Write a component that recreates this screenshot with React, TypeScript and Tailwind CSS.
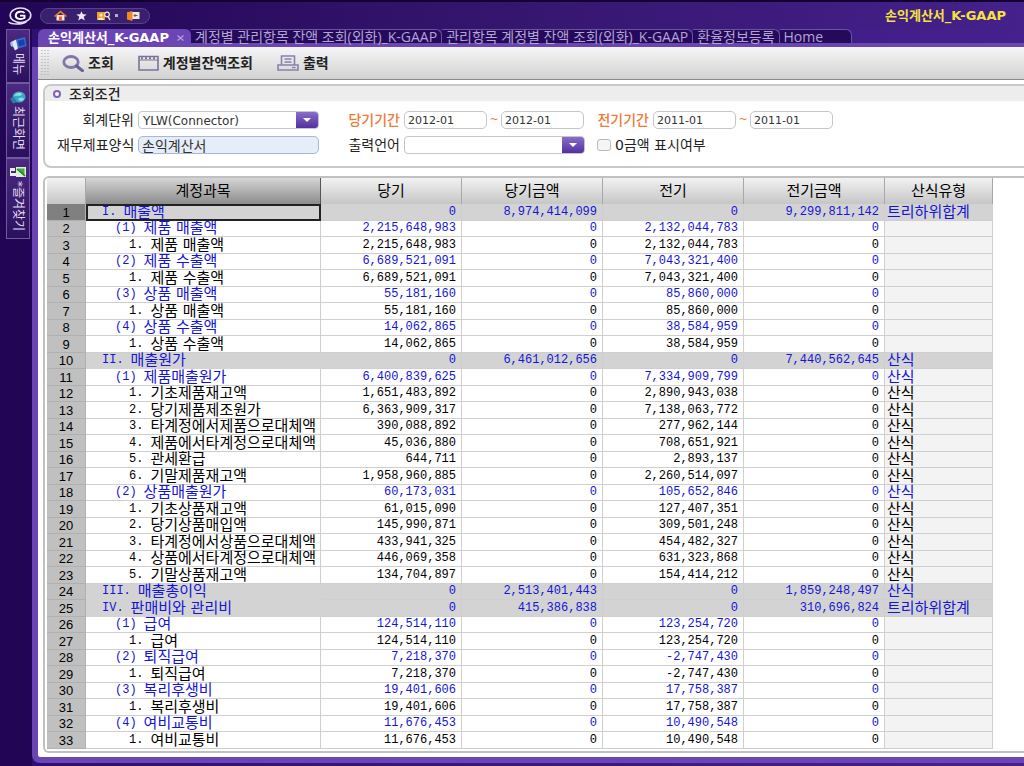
import * as React from "react";

type Level = 0 | 1 | 2;

type Row = {
  level: Level;
  no: string;
  name: string;
  current: string;
  currentSum: string;
  prior: string;
  priorSum: string;
  formula: string;
};

const row = (level: Level, no: string, name: string, current: string, prior: string, formula = ""): Row => ({
  level,
  no,
  name,
  current: level === 0 ? "0" : current,
  currentSum: level === 0 ? current : "0",
  prior: level === 0 ? "0" : prior,
  priorSum: level === 0 ? prior : "0",
  formula,
});

const ROWS: Row[] = [
  row(0, "I.", "매출액", "8,974,414,099", "9,299,811,142", "트리하위합계"),
  row(1, "(1)", "제품 매출액", "2,215,648,983", "2,132,044,783"),
  row(2, "1.", "제품 매출액", "2,215,648,983", "2,132,044,783"),
  row(1, "(2)", "제품 수출액", "6,689,521,091", "7,043,321,400"),
  row(2, "1.", "제품 수출액", "6,689,521,091", "7,043,321,400"),
  row(1, "(3)", "상품 매출액", "55,181,160", "85,860,000"),
  row(2, "1.", "상품 매출액", "55,181,160", "85,860,000"),
  row(1, "(4)", "상품 수출액", "14,062,865", "38,584,959"),
  row(2, "1.", "상품 수출액", "14,062,865", "38,584,959"),
  row(0, "II.", "매출원가", "6,461,012,656", "7,440,562,645", "산식"),
  row(1, "(1)", "제품매출원가", "6,400,839,625", "7,334,909,799", "산식"),
  row(2, "1.", "기초제품재고액", "1,651,483,892", "2,890,943,038", "산식"),
  row(2, "2.", "당기제품제조원가", "6,363,909,317", "7,138,063,772", "산식"),
  row(2, "3.", "타계정에서제품으로대체액", "390,088,892", "277,962,144", "산식"),
  row(2, "4.", "제품에서타계정으로대체액", "45,036,880", "708,651,921", "산식"),
  row(2, "5.", "관세환급", "644,711", "2,893,137", "산식"),
  row(2, "6.", "기말제품재고액", "1,958,960,885", "2,260,514,097", "산식"),
  row(1, "(2)", "상품매출원가", "60,173,031", "105,652,846", "산식"),
  row(2, "1.", "기초상품재고액", "61,015,090", "127,407,351", "산식"),
  row(2, "2.", "당기상품매입액", "145,990,871", "309,501,248", "산식"),
  row(2, "3.", "타계정에서상품으로대체액", "433,941,325", "454,482,327", "산식"),
  row(2, "4.", "상품에서타계정으로대체액", "446,069,358", "631,323,868", "산식"),
  row(2, "5.", "기말상품재고액", "134,704,897", "154,414,212", "산식"),
  row(0, "III.", "매출총이익", "2,513,401,443", "1,859,248,497", "산식"),
  row(0, "IV.", "판매비와 관리비", "415,386,838", "310,696,824", "트리하위합계"),
  row(1, "(1)", "급여", "124,514,110", "123,254,720"),
  row(2, "1.", "급여", "124,514,110", "123,254,720"),
  row(1, "(2)", "퇴직급여", "7,218,370", "-2,747,430"),
  row(2, "1.", "퇴직급여", "7,218,370", "-2,747,430"),
  row(1, "(3)", "복리후생비", "19,401,606", "17,758,387"),
  row(2, "1.", "복리후생비", "19,401,606", "17,758,387"),
  row(1, "(4)", "여비교통비", "11,676,453", "10,490,548"),
  row(2, "1.", "여비교통비", "11,676,453", "10,490,548"),
];

const TABS = ["계정별 관리항목 잔액 조회(외화)_K-GAAP", "관리항목 계정별 잔액 조회(외화)_K-GAAP", "환율정보등록"];

const INDENT: Record<Level, string> = { 0: "pl-4", 1: "pl-[29px]", 2: "pl-[43px]" };

function Logo() {
  return (
    <svg width="24" height="18" viewBox="0 0 24 18" fill="none" aria-hidden>
      <ellipse cx="12.5" cy="8.300" rx="10.300" ry="7.300" stroke="#e6e0f4" strokeWidth="1.6" />
      <path d="M.5 15c3 2.500 13 3 18-.5" stroke="#e6e0f4" strokeWidth="1.6" />
      <path d="M16.500 6C15 4 8.300 3.800 7.800 8.200c-.3 4.300 5.700 4.500 8.700 2.800V8.600H12" stroke="#fff" strokeWidth="1.900" />
    </svg>
  );
}

function HomeIcon() {
  return (
    <svg width="13" height="11" viewBox="0 0 13 11" aria-hidden>
      <path d="M2.500 5h8v5.500h-8z" fill="#f3e6dc" />
      <path d="M0 6 6.500 .5 13 6l-1.200.9L6.500 2.800 1.200 6.900z" fill="#ee7a2b" />
      <path d="M5 6.500h3v4H5z" fill="#e0661c" />
    </svg>
  );
}

function StarIcon() {
  return (
    <svg width="11" height="10" viewBox="0 0 11 10" aria-hidden>
      <path d="m5.500.3 1.400 3 3.800.2-3 2.300 1.100 3.700-3.300-2.100-3.300 2.100 1.100-3.700-3-2.300 3.800-.2z" fill="#efe8fb" />
    </svg>
  );
}

function FindUserIcon() {
  return (
    <svg width="14" height="10" viewBox="0 0 14 10" aria-hidden>
      <path d="M0 1h8v8H0z" fill="#f0a229" />
      <circle cx="4" cy="4" r="1.600" fill="#fff1cf" />
      <path d="M1 9c.5-3 5.500-3 6 0z" fill="#fff1cf" />
      <circle cx="10" cy="3.500" r="2.300" fill="#3a1c78" stroke="#f0e8da" strokeWidth="1.200" />
      <path d="m11 5.500 2 3.500" stroke="#f0e8da" strokeWidth="1.400" />
    </svg>
  );
}

function ExitIcon() {
  return (
    <svg width="13" height="10" viewBox="0 0 13 10" aria-hidden>
      <path d="M5 1h7.500v7H5z" fill="#f2eadf" />
      <path d="M0 1.200 5.500 0v10L0 8.500z" fill="#ef8a1d" />
      <path d="M7 4.500h3.500M8.500 3 7 4.500 8.500 6" stroke="#6b5a48" fill="none" />
    </svg>
  );
}

function SearchIcon() {
  return (
    <svg width="22" height="17" viewBox="0 0 22 17" fill="none" aria-hidden>
      <ellipse cx="9" cy="7" rx="7.200" ry="5.500" stroke="#8377a8" strokeWidth="2.800" />
      <path d="m14.500 11 6 4.700" stroke="#6f629a" strokeWidth="3" strokeLinecap="round" />
    </svg>
  );
}

function CalendarIcon() {
  return (
    <svg width="21" height="16" viewBox="0 0 21 16" fill="none" aria-hidden>
      <path d="M1 1.500h19v13.500H1z" stroke="#7d7099" strokeWidth="1.600" />
      <path d="M1 5h19" stroke="#7d7099" />
      <path d="M3 3.200h15" stroke="#7d7099" strokeWidth="2" strokeDasharray="2 2" />
    </svg>
  );
}

function PrinterIcon() {
  return (
    <svg width="22" height="16" viewBox="0 0 22 16" fill="none" aria-hidden>
      <path d="M4.500 10V1h13v9" stroke="#8b80ab" strokeWidth="1.600" />
      <path d="M7.500 4h7M7.500 7h7" stroke="#8b80ab" strokeWidth="1.400" />
      <path d="M1 10h20v5H1z" stroke="#8b80ab" strokeWidth="1.600" />
      <path d="M15 12.500h3.500" stroke="#8b80ab" strokeWidth="1.400" />
    </svg>
  );
}

function MenuIcon() {
  return (
    <svg width="17" height="14" viewBox="0 0 17 14" aria-hidden>
      <path d="M6 2.500 15 0l1.500 9L8 11.500z" fill="#2f6fd6" />
      <path d="m8 3.800 6-1.600 1 5.500-6 1.700z" fill="#1c3fa6" />
      <path d="m1 5 5-2.500 2 9L5 13.500z" fill="#dfe9f8" />
      <path d="M0 5.500h3v4H1z" fill="#9fc1ef" />
    </svg>
  );
}

function RecentIcon() {
  return (
    <svg width="16" height="13" viewBox="0 0 16 13" aria-hidden>
      <ellipse cx="9" cy="6" rx="6.500" ry="5.500" fill="#3ba6c9" />
      <path d="M4 5c2-4 7-4 8-2-1 3-5 1-8 2zM8 8c3-2 5-1 6 0-1 2-4 3-6 0z" fill="#8be0d8" />
      <path d="M0 7.500 4 6l3 5-4 1.500z" fill="#2b7fa5" />
    </svg>
  );
}

function FavoriteIcon() {
  return (
    <svg width="17" height="13" viewBox="0 0 17 13" aria-hidden>
      <path d="M6 1h10v10H6z" fill="#d9f2cf" />
      <path d="M7.500 2.500h7v7z" fill="#48a846" />
      <path d="m7 3 8 7" stroke="#1f7a2c" strokeWidth="1.500" />
      <path d="M0 2h5v3H1v2h5v3H0z" fill="#e8edf0" />
    </svg>
  );
}

function SideItem({ icon, label }: { icon: React.ReactNode; label: string }) {
  return (
    <button
      type="button"
      className="flex w-6 flex-col items-center gap-[2px] border border-[#6f5a9c] bg-linear-to-b from-[#4b2a80] to-[#2c1060] px-[2px] py-[7px] text-[12px] leading-4 text-[#e4dcf2]"
    >
      {icon}
      <span className="whitespace-nowrap [text-orientation:sideways] [writing-mode:vertical-rl]">{label}</span>
    </button>
  );
}

function ArrowSelect({ id, options }: { id: string; options: string[] }) {
  return (
    <div className="relative h-[18px] w-[181px] overflow-hidden rounded border border-[#c4c4cc] bg-white">
      <select id={id} className="h-full w-full appearance-none pl-1 pr-6 text-[12px] leading-4 text-[#333] outline-none">
        {options.map((o) => (
          <option key={o}>{o}</option>
        ))}
      </select>
      <span className="pointer-events-none absolute inset-y-0 right-0 flex w-[22px] items-center justify-center bg-linear-to-b from-[#8a6cc9] to-[#54309f]">
        <svg width="8" height="4" viewBox="0 0 8 4" aria-hidden>
          <path d="M0 0h8L4 4z" fill="#fff" />
        </svg>
      </span>
    </div>
  );
}

function PeriodFields({ id, label, value }: { id: string; label: string; value: string }) {
  const [from, setFrom] = React.useState(value);
  const [to, setTo] = React.useState(value);
  const field = "h-[18px] w-[83px] rounded-[5px] border border-[#c4c4cc] bg-white px-[3px] text-[11px] text-[#333] outline-none";
  return (
    <div className="flex items-center gap-1">
      <label htmlFor={id} className="w-[52px] text-right font-medium text-[#f07a35]">
        {label}
      </label>
      <input id={id} className={field} value={from} onChange={(e) => setFrom(e.target.value)} />
      <span className="flex w-[6px] justify-center text-[11px] text-[#f07a35]">~</span>
      <input aria-label={label} className={field} value={to} onChange={(e) => setTo(e.target.value)} />
    </div>
  );
}

function TabBar() {
  const tab = "rounded-tr-md border-t border-r border-[#6a53a0] bg-[#250a5c] px-1 text-left text-[#b3a4d4]";
  return (
    <nav className="flex h-[18px] items-stretch border-b-4 border-[#6b45b3] text-[14px] leading-[14px] whitespace-nowrap">
      <div className="-mb-1 flex w-[153px] items-center gap-2 rounded-t-md bg-[#6b45b3] pl-[10px] text-[13px] font-bold text-white">
        <button type="button">손익계산서_K-GAAP</button>
        <button type="button" aria-label="닫기">
          <svg width="7" height="6" viewBox="0 0 7 6" aria-hidden>
            <path d="m.5.5 6 5m0-5-6 5" stroke="#b6a1df" strokeWidth="1.200" />
          </svg>
        </button>
      </div>
      <div className="flex items-stretch font-['Open_Sans','Noto_Sans_CJK_KR',sans-serif]">
        {TABS.map((t) => (
          <button key={t} type="button" className={tab}>
            {t}
          </button>
        ))}
        <button type="button" className={`${tab} w-[72px]`}>
          Home
        </button>
      </div>
    </nav>
  );
}

function SearchPanel() {
  const [form, setForm] = React.useState("손익계산서");
  return (
    <section className="rounded-l-lg border-y-2 border-l-2 border-[#c9c9c9] bg-white pb-3 text-[14px] leading-4 text-[#222]">
      <h2 className="flex h-[15px] items-center gap-2 rounded-tl-md bg-[#ededed] pl-2 font-medium">
        <span className="h-2 w-2 rounded-full border-2 border-[#7e5fc0] bg-white" />
        조회조건
      </h2>
      <div className="mt-[10px] grid grid-cols-[291px_249px_auto] gap-y-[7px] pl-3 whitespace-nowrap">
        <div className="flex items-center gap-1">
          <label htmlFor="unit" className="w-[77px] text-right">
            회계단위
          </label>
          <ArrowSelect id="unit" options={["YLW(Connector)"]} />
        </div>
        <PeriodFields id="current-period" label="당기기간" value="2012-01" />
        <PeriodFields id="prior-period" label="전기기간" value="2011-01" />
        <div className="flex items-center gap-1">
          <label htmlFor="form" className="w-[77px] text-right">
            재무제표양식
          </label>
          <input
            id="form"
            className="h-[18px] w-[181px] rounded-[5px] border border-[#a9b6d6] bg-[#e6edfa] pl-[3px] text-[14px] leading-4 text-[#333] outline-none"
            value={form}
            onChange={(e) => setForm(e.target.value)}
          />
        </div>
        <div className="flex items-center gap-1">
          <label htmlFor="lang" className="w-[52px] text-right">
            출력언어
          </label>
          <ArrowSelect id="lang" options={[""]} />
        </div>
        <label className="flex items-center gap-1">
          <input type="checkbox" className="h-3 w-[14px] appearance-none rounded-[3px] border border-[#bbb] bg-[#f5f5f5] checked:bg-[#54309f]" />
          0금액 표시여부
        </label>
      </div>
    </section>
  );
}

function StatementTable() {
  const head = "h-[26px] border-r border-[#a8a8a8] bg-linear-to-b from-[#f2f2f2] to-[#c6c6c6] p-0 font-normal";
  const amount = "border-r border-b border-[#cfcfcf] p-0 pr-[5px] text-right font-[Liberation_Mono] text-[12px] leading-[15px]";
  return (
    <table className="w-[946px] table-fixed border-separate border-spacing-0 text-[15px] leading-[15px] whitespace-nowrap text-black">
      <colgroup>
        <col className="w-[39px]" />
        <col className="w-[235px]" />
        <col className="w-[141px]" />
        <col className="w-[141px]" />
        <col className="w-[141px]" />
        <col className="w-[141px]" />
        <col className="w-[108px]" />
      </colgroup>
      <thead>
        <tr>
          <th className={head} aria-label="번호" />
          <th className="h-[26px] border-r border-[#555] bg-linear-to-b from-[#d6d6d6] to-[#8c8c8c] p-0 font-normal">계정과목</th>
          <th className={head}>당기</th>
          <th className={head}>당기금액</th>
          <th className={head}>전기</th>
          <th className={head}>전기금액</th>
          <th className={head}>산식유형</th>
        </tr>
      </thead>
      <tbody>
        {ROWS.map((r, i) => (
          <tr key={i} className={`odd:h-[17px] even:h-4 ${r.level === 0 ? "bg-[#d3d3d3]" : "bg-white"} ${r.level < 2 ? "text-[#1414d8]" : ""}`}>
            <th
              scope="row"
              className={`border-r border-b border-[#b0b0b0] p-0 font-[Liberation_Sans] text-[13px] leading-[15px] font-normal text-black ${i === 0 ? "bg-[#808080]" : "bg-[#c0c0c0]"}`}
            >
              {i + 1}
            </th>
            <td className={`border-r border-b p-0 ${r.level === 0 ? "border-[#d3d3d3]" : "border-[#cfcfcf]"} ${i === 0 ? "outline-2 -outline-offset-2 outline-[#222]" : ""}`}>
              <div className={`flex h-[15px] items-center gap-[7px] ${INDENT[r.level]}`}>
                <span className="font-[Liberation_Mono] text-[12px]">{r.no}</span>
                <span>{r.name}</span>
              </div>
            </td>
            <td className={amount}>{r.current}</td>
            <td className={amount}>{r.currentSum}</td>
            <td className={amount}>{r.prior}</td>
            <td className={amount}>{r.priorSum}</td>
            <td className={`border-r border-b border-[#cfcfcf] p-0 pl-[2px] ${r.level === 0 ? "" : "bg-[#f3f3f3]"}`}>
              <div className="h-[15px]">{r.formula}</div>
            </td>
          </tr>
        ))}
      </tbody>
    </table>
  );
}

export default function App() {
  return (
    <div className="flex min-h-screen flex-col overflow-hidden bg-[#220655] font-['DejaVu_Sans','Noto_Sans_CJK_KR',sans-serif]">
      <div className="flex flex-1 flex-col bg-linear-to-r from-[#220655] via-[#35166f] to-[#45218c]">
        <header className="flex h-[29px] items-center border-t-2 border-[#120030] pl-2">
          <Logo />
          <div className="ml-2 flex h-4 w-[110px] items-center justify-around rounded-full border border-[#57408c] bg-[#38206f] pl-2 pr-1">
            <button type="button" aria-label="홈">
              <HomeIcon />
            </button>
            <button type="button" aria-label="즐겨찾기">
              <StarIcon />
            </button>
            <button type="button" aria-label="사용자 찾기" className="flex items-center gap-1">
              <FindUserIcon />
              <span className="h-[3px] w-[3px] bg-[#b7a8dc]" />
            </button>
            <button type="button" aria-label="종료">
              <ExitIcon />
            </button>
          </div>
          <h1 className="ml-auto pr-[18px] text-[13px] leading-4 font-bold text-[#f5e33c]">손익계산서_K-GAAP</h1>
        </header>

        <div className="flex flex-1">
          <aside className="flex w-8 flex-col bg-[#220655] pl-[6px]">
            <SideItem icon={<MenuIcon />} label="메뉴" />
            <SideItem icon={<RecentIcon />} label="최근화면" />
            <SideItem icon={<FavoriteIcon />} label="*즐겨찾기" />
          </aside>

          <div className="flex min-w-0 flex-1 flex-col bg-linear-to-r from-[#2e1070] to-[#45218c] pb-[3px]">
            <div className="pl-[6px]">
              <TabBar />
            </div>
            <main className="flex flex-1 flex-col rounded-bl-lg border-b-[6px] border-l-[6px] border-[#6b45b3] bg-white">
              <div className="flex h-[33px] items-center border-b border-[#8a8a8a] bg-linear-to-b from-[#f6f6f6] to-[#d2d2d2] pl-[3px] text-[14px] leading-4 font-bold text-[#222]">
                <svg width="8" height="26" viewBox="0 0 8 26" aria-hidden>
                  <path d="M1 0v26M4 0v26M7 0v26" stroke="#a5a5a5" strokeDasharray="1 2" />
                </svg>
                <button type="button" className="ml-[13px] flex items-center gap-1">
                  <SearchIcon />
                  조회
                </button>
                <button type="button" className="ml-6 flex items-center gap-1">
                  <CalendarIcon />
                  계정별잔액조회
                </button>
                <button type="button" className="ml-6 flex items-center gap-1">
                  <PrinterIcon />
                  출력
                </button>
              </div>
              <div className="flex flex-col gap-2 pt-1 pb-1 pl-[5px]">
                <SearchPanel />
                <section className="overflow-hidden rounded-l-md border-y-2 border-l-2 border-[#c0c0c0] bg-white pb-[2px] pl-[2px]">
                  <StatementTable />
                </section>
              </div>
            </main>
          </div>
        </div>
      </div>
    </div>
  );
}
